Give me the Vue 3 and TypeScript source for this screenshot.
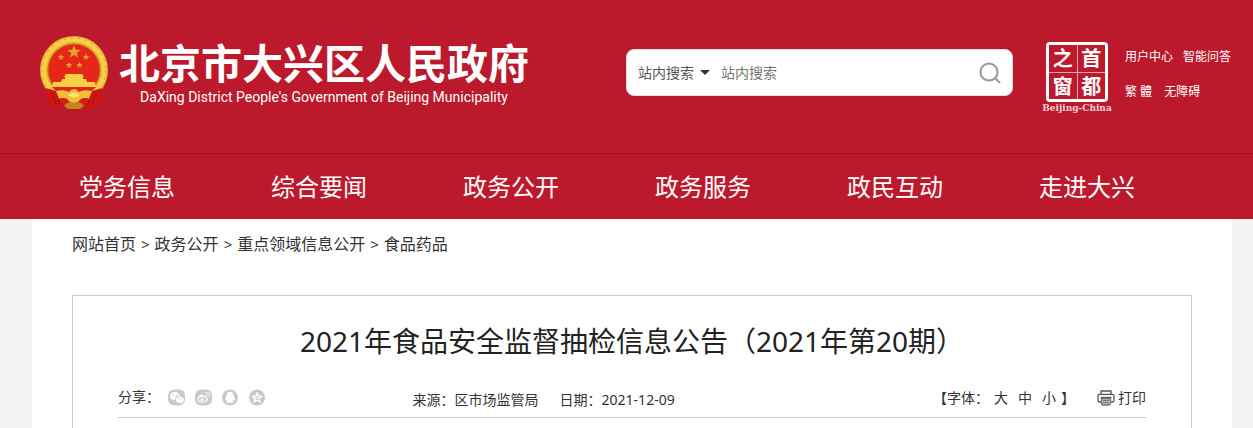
<script setup lang="ts">
import { ref } from 'vue'

const navItems: string[] = ['党务信息', '综合要闻', '政务公开', '政务服务', '政民互动', '走进大兴']
const crumbs: string[] = ['网站首页', '政务公开', '重点领域信息公开', '食品药品']
const sealChars: string[] = ['之', '首', '窗', '都']
const sizes: string[] = ['大', '中', '小']
const scope = ref('站内搜索')
const keyword = ref('')
</script>

<template>
  <div class="page">
    <header class="header">
      <div class="masthead">
        <a class="brand" href="#">
          <svg class="emblem" viewBox="0 0 70 76" aria-hidden="true">
            <circle cx="35" cy="35" r="34" fill="#e9b02c" />
            <circle cx="35" cy="35" r="30.5" fill="none" stroke="#f6cf4a" stroke-width="5" />
            <circle cx="35" cy="35" r="32" fill="none" stroke="#dca026" stroke-width="1" stroke-dasharray="3 4" />
            <circle cx="35" cy="35" r="26" fill="#e52619" stroke="#b9781b" stroke-width="1" />
            <g fill="#e3a52b">
              <path d="M35 10 L36.7 14.8 L41.7 14.9 L37.7 17.9 L39.1 22.7 L35 19.8 L30.9 22.7 L32.3 17.9 L28.3 14.9 L33.3 14.8Z" />
              <path d="M22 18.5 L22.9 20.9 L25.4 20.9 L23.4 22.4 L24.1 24.9 L22 23.4 L19.9 24.9 L20.6 22.4 L18.6 20.9 L21.1 20.9Z" />
              <path d="M47 18.5 L47.9 20.9 L50.4 20.9 L48.4 22.4 L49.1 24.9 L47 23.4 L44.9 24.9 L45.6 22.4 L43.6 20.9 L46.1 20.9Z" />
              <path d="M30 26.5 L30.9 28.9 L33.4 28.9 L31.4 30.4 L32.1 32.9 L30 31.4 L27.9 32.9 L28.6 30.4 L26.6 28.9 L29.1 28.9Z" />
              <path d="M40.5 26.5 L41.4 28.9 L43.9 28.9 L41.9 30.4 L42.6 32.9 L40.5 31.4 L38.4 32.9 L39.1 30.4 L37.1 28.9 L39.6 28.9Z" />
            </g>
            <path d="M27 39H43L45 42H25Z M26 42H44V44H26Z M23 44H47L48 47H56L57 52H13L14 47H22Z" fill="#f7cf45" />
            <path d="M13 52H57L52 57H18Z" fill="#e0261a" />
            <path d="M7 53 L17 56 L26 66 L22 73 L16 71 L6 69 L9 61Z M63 53 L53 56 L44 66 L48 73 L54 71 L64 69 L61 61Z" fill="#cf1414" />
            <path d="M13 58 L17 69 M18 60 L21 70 M57 58 L53 69 M52 60 L49 70" fill="none" stroke="#a30f14" stroke-width="1" />
            <path d="M17 56 Q25 54 30 57 Q35 51 40 57 Q45 54 53 56 L50 64 Q43 61 40 65 Q35 69 30 65 Q27 61 20 64Z" fill="#f1bf35" />
            <path d="M29 60 Q35 55 41 60 Q35 65 29 60Z" fill="#fbe277" />
            <path d="M20 64 Q27 61 30 66 L35 69 L40 66 Q43 61 50 64 L46 71 H24Z" fill="#d81c16" />
            <path d="M25 71 Q30 65 35 68 Q40 65 45 71 L41 74 H29Z" fill="#c8851e" />
          </svg>
          <span class="brand-text">
            <span class="brand-cn">北京市大兴区人民政府</span>
            <span class="brand-en">DaXing District People's Government of Beijing Municipality</span>
          </span>
        </a>

        <form class="search" @submit.prevent>
          <div class="scope">
            <select v-model="scope" aria-label="搜索范围">
              <option>站内搜索</option>
            </select>
            <svg class="caret" viewBox="0 0 10 5" aria-hidden="true"><path d="M0 0H10L5 5Z" fill="#333" /></svg>
          </div>
          <input v-model="keyword" type="text" placeholder="站内搜索" aria-label="搜索关键词" />
          <button type="submit" aria-label="搜索">
            <svg viewBox="0 0 22 22" fill="none" stroke="#999" stroke-width="2">
              <circle cx="10" cy="10" r="8.6" />
              <path d="M15.8 15.8L21 21" />
            </svg>
          </button>
        </form>

        <a class="capital" href="#">
          <span class="seal"><span v-for="c in sealChars" :key="c" class="seal-char">{{ c }}</span></span>
          <span class="seal-caption">Beijing-China</span>
        </a>

        <div class="tools">
          <div class="tool-row near"><a href="#">用户中心</a><a href="#">智能问答</a></div>
          <div class="tool-row"><a href="#">繁 體</a><a href="#">无障碍</a></div>
        </div>
      </div>

      <nav class="nav">
        <a v-for="item in navItems" :key="item" href="#">{{ item }}</a>
      </nav>
    </header>

    <main class="content">
      <nav class="crumbs" aria-label="当前位置">
        <template v-for="(c, i) in crumbs" :key="c">
          <span v-if="i > 0">&gt;</span>
          <a href="#">{{ c }}</a>
        </template>
      </nav>

      <article class="article">
        <h1>2021年食品安全监督抽检信息公告（2021年第20期）</h1>
        <div class="meta">
          <div class="share">
            <span>分享：</span>
            <button type="button" aria-label="微信">
              <svg viewBox="0 0 17 17">
                <rect width="17" height="16" y=".5" rx="6" fill="#c9c9c9" />
                <path d="M7 3C4 3 2 4.8 2 7C2 8.3 2.7 9.3 3.8 10L3.4 11.5L5.2 10.6Q6 10.9 7 10.8C7 8.2 9 6.6 11.8 6.6C11.4 4.4 9.5 3 7 3Z" fill="#fff" />
                <path d="M12 7.4C9.6 7.4 7.8 8.8 7.8 10.7S9.6 13.9 12 13.9L13.2 13.7L14.7 14.5L14.4 13.1C15.4 12.5 16 11.7 16 10.7C16 8.8 14.2 7.4 12 7.4Z" fill="#fff" />
                <g fill="#bbb"><circle cx="5.2" cy="6" r=".7" /><circle cx="8.5" cy="6" r=".7" /><circle cx="10.6" cy="10" r=".6" /><circle cx="13.3" cy="10" r=".6" /></g>
              </svg>
            </button>
            <button type="button" aria-label="微博">
              <svg viewBox="0 0 17 17">
                <rect width="17" height="16" y=".5" rx="6" fill="#c9c9c9" />
                <path d="M7.5 5.2C5.5 5 2.5 8 2.5 10.4C2.5 12.5 4.8 13.8 7.5 13.8C10.8 13.8 13 12 13 10.3C13 9 12 8.6 11.2 8.4C11.8 6.8 10.6 6.3 8.4 7.3C8.7 6.1 8.5 5.3 7.5 5.2Z" fill="#fff" />
                <ellipse cx="7.5" cy="10.5" rx="3.7" ry="2.4" fill="#c9c9c9" />
                <circle cx="7.1" cy="10.7" r="1.6" fill="#fff" />
                <path d="M10.5 3.3C13.2 2.6 15.2 5 14.2 7.6M10.9 5.3C12.2 5 13 6 12.5 7.2" fill="none" stroke="#fff" stroke-width="1" stroke-linecap="round" />
              </svg>
            </button>
            <button type="button" aria-label="QQ">
              <svg viewBox="0 0 17 17">
                <circle cx="8" cy="8.5" r="8" fill="#c9c9c9" />
                <path d="M8 2.8C5.9 2.8 4.5 4.3 4.5 6.7L3.3 9.5C2.9 10.7 3.1 11.7 3.5 11.7L4.4 10.8L5.3 12.4C4 13.2 4.5 14 6 14Q7.3 14 8 13.3Q8.7 14 10 14C11.5 14 12 13.2 10.7 12.4L11.6 10.8L12.5 11.7C12.9 11.7 13.1 10.7 12.7 9.5L11.5 6.7C11.5 4.3 10.1 2.8 8 2.8Z" fill="#fff" />
              </svg>
            </button>
            <button type="button" aria-label="QQ空间">
              <svg viewBox="0 0 17 17">
                <circle cx="8" cy="8.5" r="8" fill="#c9c9c9" />
                <path d="M8 2.5L9.8 6.3L14 6.9L11 9.8L11.7 14L8 12L4.3 14L5 9.8L2 6.9L6.2 6.3Z" fill="#fff" />
                <path d="M5.5 7.6H10L6.5 10.4H11" fill="none" stroke="#c9c9c9" stroke-width=".9" />
              </svg>
            </button>
          </div>
          <div class="source"><span>来源：区市场监管局</span><span>日期：2021-12-09</span></div>
          <div class="options">
            <div class="font-size">
              <span>【字体：</span>
              <button v-for="s in sizes" :key="s" type="button">{{ s }}</button>
              <span>】</span>
            </div>
            <button class="print" type="button">
              <svg viewBox="0 0 18 16" fill="none" stroke="#555" stroke-width="1.3">
                <path d="M4 4V1H14V4M4 12H2.5Q1 12 1 10.5V6Q1 4.3 2.7 4.3H15.3Q17 4.3 17 6V10.5Q17 12 15.5 12H14" />
                <path d="M3.5 7.5H14.5" />
                <path d="M4.5 8.5H13.5V13.5Q13.5 15 12 15H6Q4.5 15 4.5 13.5Z" fill="#bbb" stroke="#777" />
                <path d="M6 10.5H12M6 12.7H12" stroke="#777" stroke-width="1" />
              </svg>
              <span>打印</span>
            </button>
          </div>
        </div>
      </article>
    </main>
  </div>
</template>

<style>
html {
  background: #f4f4f4;
}
</style>

<style scoped>
.page {
  font-family: 'Noto Sans', 'Noto Sans CJK SC', sans-serif;
  color: #333;
  display: flex;
  flex-direction: column;
  min-height: 100vh;
  overflow: hidden;
}
a {
  color: inherit;
  text-decoration: none;
}
button {
  border: 0;
  padding: 0;
  background: none;
  font: inherit;
  color: inherit;
  cursor: pointer;
}
svg {
  display: block;
}
.header {
  background: #bc1a2c;
  color: #fff;
}
.masthead {
  height: 153px;
  box-sizing: border-box;
  padding: 35px 21px 0 39px;
  display: flex;
  align-items: flex-start;
}
.brand {
  display: flex;
  gap: 10px;
  margin-right: auto;
}
.emblem {
  width: 70px;
  height: 76px;
}
.brand-text {
  display: flex;
  flex-direction: column;
  align-items: center;
  padding-top: 4px;
  white-space: nowrap;
}
.brand-cn {
  font-size: 41px;
  font-weight: 700;
  line-height: 48px;
}
.brand-en {
  font-family: Roboto, sans-serif;
  font-size: 14px;
  line-height: 20px;
}
.search {
  display: flex;
  align-items: center;
  box-sizing: border-box;
  width: 387px;
  height: 47px;
  margin-top: 14px;
  padding: 0 11px;
  background: #fff;
  border: 1px solid #ddd;
  border-radius: 8px;
  font-size: 14px;
}
.scope {
  display: flex;
  align-items: center;
  gap: 6px;
}
.search select {
  appearance: none;
  border: 0;
  padding: 0;
  background: none;
  font: inherit;
  color: #555;
}
.caret {
  width: 10px;
  height: 5px;
}
.search input {
  flex: 1;
  min-width: 0;
  border: 0;
  padding: 0;
  margin-left: 11px;
  background: none;
  font: inherit;
  color: #333;
}
.search input::placeholder {
  color: #757575;
}
.search button svg {
  width: 22px;
  height: 22px;
}
.capital {
  display: flex;
  flex-direction: column;
  align-items: center;
  width: 70px;
  margin: 7px 13px 0 29px;
}
.seal {
  display: grid;
  grid-template-columns: 1fr 1fr;
  gap: 1px;
  width: 56px;
  height: 54px;
  border: 3px solid #fff;
  border-radius: 4px;
  background: #e5a5ad;
}
.seal-char {
  display: flex;
  align-items: center;
  justify-content: center;
  background: #bc1a2c;
  font-family: 'Noto Sans CJK SC', sans-serif;
  font-size: 20px;
  font-weight: 700;
  line-height: 26px;
}
.seal-caption {
  font-family: 'DejaVu Serif', serif;
  font-size: 9px;
  font-weight: 700;
  line-height: 12px;
  color: #f3d0d5;
}
.tools {
  width: 107px;
  padding-top: 13px;
  font-size: 12px;
  line-height: 17px;
  white-space: nowrap;
}
.tool-row {
  display: flex;
  gap: 12px;
  margin-bottom: 18px;
}
.tool-row.near {
  gap: 10px;
}
.nav {
  display: grid;
  grid-template-columns: repeat(6, 1fr);
  padding: 0 70px 0 31px;
  border-top: 1px solid #8f1a24;
  font-size: 24px;
  line-height: 65px;
  text-align: center;
}
.content {
  flex: 1;
  display: flex;
  flex-direction: column;
  margin: 0 21px 0 32px;
  padding: 0 40px;
  background: #fff;
}
.crumbs {
  display: flex;
  gap: 5px;
  padding: 13px 0 38px;
  font-size: 16px;
  line-height: 25px;
}
.crumbs span {
  font-size: 15px;
}
.article {
  flex: 1;
  padding: 0 45px;
  border: 1px solid #ccc;
  border-bottom: 0;
}
h1 {
  margin: 0;
  padding: 25px 0 21px;
  font-size: 28px;
  font-weight: 400;
  line-height: 40px;
  text-align: center;
  color: #222;
}
.meta {
  display: grid;
  grid-template-columns: 5fr auto 8fr;
  align-items: center;
  height: 35px;
  border-bottom: 1px solid #ccc;
  font-size: 14px;
  line-height: 20px;
  white-space: nowrap;
}
.share {
  display: flex;
  align-items: center;
  gap: 10px;
  padding-bottom: 5px;
}
.share span {
  margin-right: -2px;
}
.share svg {
  width: 17px;
  height: 17px;
}
.source {
  display: flex;
  gap: 21px;
}
.options {
  display: flex;
  justify-content: flex-end;
  gap: 27px;
  padding-bottom: 3px;
}
.font-size {
  display: flex;
  gap: 10px;
}
.font-size span {
  margin: 0 -5px;
}
.print {
  display: flex;
  align-items: center;
  gap: 3px;
}
.print svg {
  width: 18px;
  height: 16px;
}
</style>
